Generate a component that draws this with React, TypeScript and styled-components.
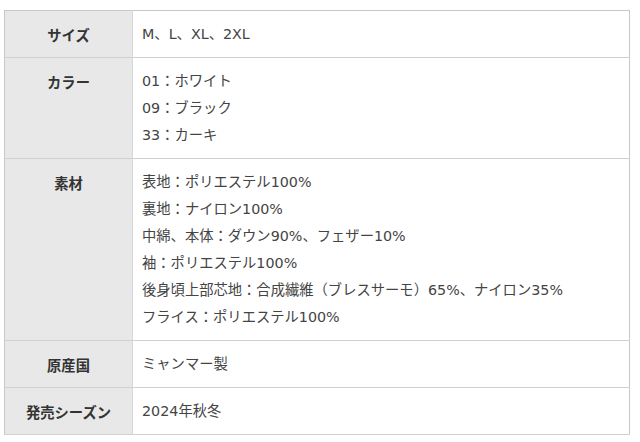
import React from "react";
import styled, { createGlobalStyle } from "styled-components";

const GlobalStyle = createGlobalStyle`
  body {
    margin: 0;
    background: #fff;
    font-family: "DejaVu Sans", "Noto Sans CJK JP", sans-serif;
    color: #333;
  }
`;

const Wrapper = styled.div`
  padding: 10px 10px 0 4px;
`;

const SpecTable = styled.table`
  width: 626px;
  border-collapse: collapse;
  border: 1px solid #c8c8c8;
  font-size: 14.3px;
  line-height: 27px;
`;

const Row = styled.tr`
  border-bottom: 1px solid #d0d0d0;
`;

const Head = styled.th`
  width: 128px;
  box-sizing: border-box;
  background: #e8e8e8;
  border-right: 1px solid #d6d6d6;
  font-family: "Noto Sans CJK JP", sans-serif;
  font-weight: bold;
  text-align: center;
  vertical-align: top;
  padding: 10px 4px 9px;
  color: #333;
  white-space: nowrap;
`;

const Cell = styled.td`
  text-align: left;
  vertical-align: top;
  padding: 10px 9px 9px;
  color: #444;
`;

const Line = styled.div`
  white-space: nowrap;
`;

type Spec = { label: string; lines: string[] };

const specs: Spec[] = [
  { label: "サイズ", lines: ["M、L、XL、2XL"] },
  { label: "カラー", lines: ["01：ホワイト", "09：ブラック", "33：カーキ"] },
  {
    label: "素材",
    lines: [
      "表地：ポリエステル100%",
      "裏地：ナイロン100%",
      "中綿、本体：ダウン90%、フェザー10%",
      "袖：ポリエステル100%",
      "後身頃上部芯地：合成繊維（ブレスサーモ）65%、ナイロン35%",
      "フライス：ポリエステル100%",
    ],
  },
  { label: "原産国", lines: ["ミャンマー製"] },
  { label: "発売シーズン", lines: ["2024年秋冬"] },
];

const App: React.FC = () => {
  return (
    <Wrapper>
      <GlobalStyle />
      <SpecTable>
        <tbody>
          {specs.map((spec) => (
            <Row key={spec.label}>
              <Head>{spec.label}</Head>
              <Cell>
                {spec.lines.map((line) => (
                  <Line key={line}>{line}</Line>
                ))}
              </Cell>
            </Row>
          ))}
        </tbody>
      </SpecTable>
    </Wrapper>
  );
};

export default App;
